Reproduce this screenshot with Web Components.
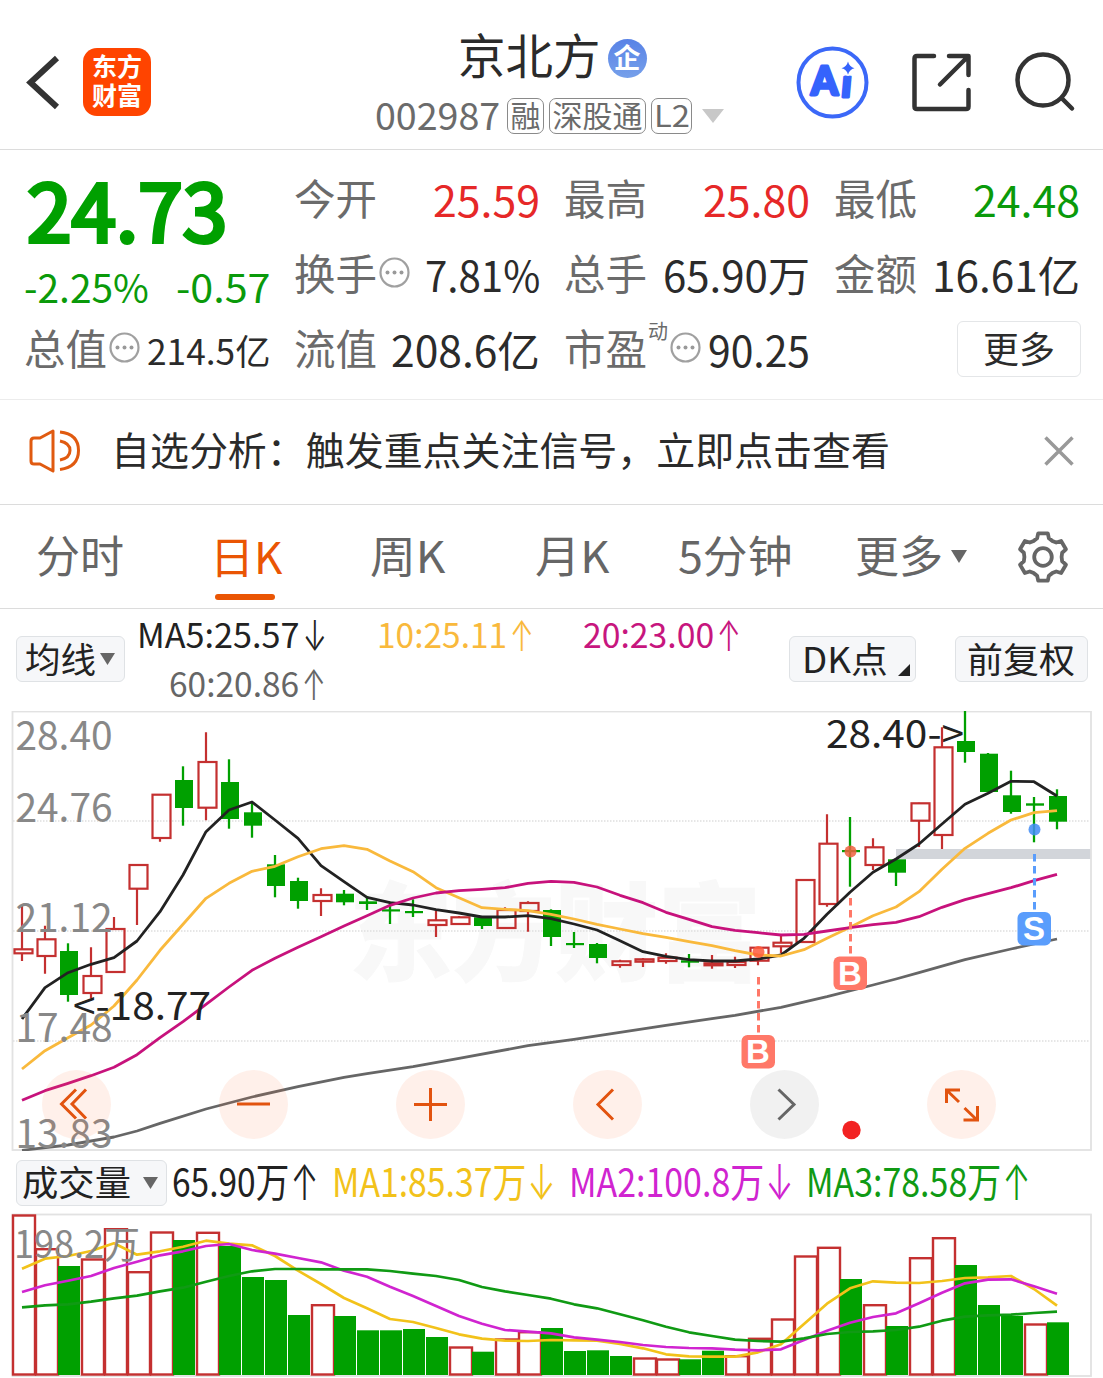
<!DOCTYPE html>
<html lang="zh-CN">
<head>
<meta charset="UTF-8">
<meta name="viewport" content="width=device-width, initial-scale=1.0">
<title>京北方 002987</title>
<style>
    :root {
        --up: #e62828;
        --down: #0a9a0a;
        --text: #2b2b2b;
        --muted: #6b6b6b;
        --accent: #ea5504;
        --line: #dcdcdc;
    }

    body {
        margin: 0;
        background: #fff;
        color: var(--text);
        font-family: "Noto Sans CJK SC", "Noto Sans", sans-serif;
    }
</style>
</head>
<body>
<stock-page></stock-page>

<script>
const FONT = '"Noto Sans CJK SC", "Noto Sans", sans-serif';

// One line of text, optically centred; "w" squeezes or stretches it to a width
class FitText extends HTMLElement {
    constructor() {
        super();
        this.attachShadow({ mode: 'open' });
        this.shadowRoot.innerHTML = `
            <style>
                :host { display: inline-block; line-height: 1; white-space: nowrap; flex: none; }
                span { display: inline-block; transform-origin: 0 50%; transform: translateY(-0.065em); }
            </style>
            <span><slot></slot></span>
        `;
    }

    connectedCallback() {
        const target = parseFloat(this.getAttribute('w'));
        if (!target) return;
        const span = this.shadowRoot.querySelector('span');
        const natural = span.offsetWidth;
        this.style.width = target + 'px';
        span.style.transform = `translateY(-0.065em) scaleX(${target / natural})`;
    }
}

// Trend arrow behind a moving average value: narrow and tall
class TrendArrow extends HTMLElement {
    constructor() {
        super();
        this.attachShadow({ mode: 'open' });
        this.shadowRoot.innerHTML = `
            <style>
                :host {
                    display: flex;
                    align-items: center;
                    justify-content: center;
                    width: 34px;
                    height: 40px;
                    margin-left: -2px;
                    font: 300 1.12em/1 Inter, "DejaVu Sans", sans-serif;
                    flex: none;
                }
                span { display: block; transform: scale(0.76, 1.12); }
            </style>
            <span><slot></slot></span>
        `;
    }
}

class InfoDots extends HTMLElement {
    constructor() {
        super();
        this.attachShadow({ mode: 'open' });
        this.shadowRoot.innerHTML = `
            <style>
                :host { display: block; width: 31px; height: 31px; flex: none; }
                svg { display: block; }
            </style>
            <svg width="31" height="31" viewBox="0 0 31 31">
                <circle cx="15.5" cy="15.5" r="14" fill="none" stroke="#a0a0a0" stroke-width="2.2"/>
                <g fill="#999"><circle cx="8.5" cy="15.5" r="2"/><circle cx="15.5" cy="15.5" r="2"/><circle cx="22.5" cy="15.5" r="2"/></g>
            </svg>
        `;
    }
}

class AppHeader extends HTMLElement {
    constructor() {
        super();
        this.attachShadow({ mode: 'open' });
        this.shadowRoot.innerHTML = `
            <style>
                :host {
                    display: flex;
                    height: 149px;
                    border-bottom: 1px solid var(--line);
                }
                svg { display: block; }
                .left { display: flex; align-items: center; padding: 15px 0 0 24px; width: 351px; box-sizing: border-box; }
                .logo {
                    display: flex;
                    flex-direction: column;
                    align-items: center;
                    justify-content: center;
                    gap: 4px;
                    width: 68px;
                    height: 68px;
                    margin-left: 21px;
                    border-radius: 14px;
                    background: #ff4400;
                    color: #fff;
                    font-size: 25px;
                    font-weight: 700;
                }
                .middle { display: flex; flex-direction: column; width: 400px; }
                .name { display: flex; align-items: center; height: 44px; margin-top: 35px; padding-left: 107px; font-size: 47.5px; }
                .badge {
                    display: flex;
                    align-items: center;
                    justify-content: center;
                    width: 39px;
                    height: 39px;
                    margin: 3px 0 0 7px;
                    border-radius: 50%;
                    background: linear-gradient(#5882e6, #76a0ea);
                    color: #fff;
                    font-size: 27px;
                    font-weight: 700;
                }
                .code { display: flex; align-items: center; height: 36px; margin-top: 19px; padding-left: 24px; color: var(--muted); font-size: 37px; }
                .tag {
                    display: flex;
                    align-items: center;
                    justify-content: center;
                    box-sizing: border-box;
                    height: 36px;
                    margin-right: 5px;
                    border: 1.5px solid #8a8a8a;
                    border-radius: 7px;
                    font-size: 30px;
                }
                .actions { display: flex; padding: 45px 0 0 44px; }
            </style>
            <div class="left">
                <svg width="38" height="60" viewBox="0 0 38 60"><path d="M33 6 6.500 30.500 33 55" fill="none" stroke="#333" stroke-width="6"/></svg>
                <div class="logo"><fit-text w="50">东方</fit-text><fit-text w="50">财富</fit-text></div>
            </div>
            <div class="middle">
                <div class="name"><fit-text>京北方</fit-text><span class="badge"><fit-text>企</fit-text></span></div>
                <div class="code">
                    <fit-text w="125">002987</fit-text>
                    <span class="tag" style="width:37px;margin-left:7px">
                        <fit-text>融</fit-text></span>
                    <span class="tag" style="width:97px"><fit-text>深股通</fit-text></span>
                    <span class="tag" style="width:41px"><fit-text w="36">L2</fit-text></span>
                    <svg width="22" height="14" viewBox="0 0 22 14" style="margin-left:5px"><path d="M0 0H22L11 14Z" fill="#c8c8c8"/></svg>
                </div>
            </div>
            <div class="actions">
                <svg width="308" height="76" viewBox="795 45 308 76" fill="none">
                    <circle cx="832.5" cy="82.500" r="34" stroke="#3b68f8" stroke-width="4"/>
                    <g fill="#3563fc" stroke="#3563fc" stroke-linejoin="round" font-family="Lato, sans-serif" font-weight="900">
                        <text x="811" y="94.500" font-size="39" stroke-width="3" textLength="27" lengthAdjust="spacingAndGlyphs">A</text>
                        <text font-size="39" stroke-width="3" transform="translate(840.5 96.5) skewX(-5)">i</text>
                    </g>
                    <circle cx="848" cy="67.500" r="8.500" fill="#fff"/>
                    <path d="M848 61.500q1.200 5 6.500 6.700-5 1-6.500 6.500-1.200-5.500-6.500-6.500 5.300-1.700 6.500-6.700Z" fill="#3563fc"/>
                    <g stroke="#333" stroke-width="4.500" stroke-linecap="round" stroke-linejoin="round">
                        <path d="M934 56H917q-2.500 0-2.500 2.500V106.500q0 2.500 2.500 2.500H966q2.500 0 2.500-2.500V90M949 56H968.500V75M968 56.500 940 84.500"/>
                        <circle cx="1043" cy="80" r="25.500"/>
                        <path d="M1061.500 98 1072 108.500"/>
                    </g>
                </svg>
            </div>
        `;
    }
}

class QuoteCell extends HTMLElement {
    constructor() {
        super();
        this.attachShadow({ mode: 'open' });
        const get = name => this.getAttribute(name);
        this.shadowRoot.innerHTML = `
            <style>
                :host { display: flex; align-items: center; justify-content: space-between; }
                .label { display: flex; align-items: center; color: var(--muted); font-size: 41.5px; }
                .sup { font-size: 20px; margin: -38px 0 0 1px; }
                info-dots { margin: -6px 0 0 2px; }
                .value { margin-top: 2px; font-size: ${get('size') || 42}px; color: ${get('tone') ? `var(--${get('tone')})` : 'var(--text)'}; }
            </style>
            <span class="label">
                <fit-text>${get('label')}</fit-text>
                ${get('sup') ? `<fit-text class="sup">${get('sup')}</fit-text>` : ''}
                ${this.hasAttribute('info') ? '<info-dots></info-dots>' : ''}
            </span>
            <fit-text class="value" w="${get('w')}">${get('value')}</fit-text>
        `;
    }
}

class QuotePanel extends HTMLElement {
    constructor() {
        super();
        this.attachShadow({ mode: 'open' });
        this.shadowRoot.innerHTML = `
            <style>
                :host {
                    display: grid;
                    box-sizing: border-box;
                    height: 250px;
                    grid-template-columns: repeat(4, 246px);
                    grid-template-rows: 74px 75px 75px;
                    column-gap: 24px;
                    padding: 14px 0 0 24px;
                    border-bottom: 1px solid #ececec;
                }
                .price { grid-row: span 2; color: var(--down); }
                .big { display: flex; align-items: center; height: 97px; padding-left: 3px; font-size: 79px; -webkit-text-stroke: 4px #00a000; color: #00a000; }
                .change { display: flex; align-items: center; justify-content: space-between; height: 55px; font-size: 39.5px; }
                .more {
                    display: flex;
                    align-items: center;
                    justify-content: center;
                    justify-self: end;
                    align-self: center;
                    box-sizing: border-box;
                    width: 124px;
                    height: 56px;
                    margin: -4px -1px 0 0;
                    border: 1.5px solid #e4e6e8;
                    border-radius: 6px;
                    font-size: 36px;
                }
            </style>
            <div class="price">
                <div class="big"><fit-text w="200">24.73</fit-text></div>
                <div class="change"><fit-text w="125">-2.25%</fit-text><fit-text w="94">-0.57</fit-text></div>
            </div>
            <quote-cell label="今开" value="25.59" tone="up" w="107"></quote-cell>
            <quote-cell label="最高" value="25.80" tone="up" w="107"></quote-cell>
            <quote-cell label="最低" value="24.48" tone="down" w="107"></quote-cell>
            <quote-cell label="换手" value="7.81%" w="115" info></quote-cell>
            <quote-cell label="总手" value="65.90万" w="147"></quote-cell>
            <quote-cell label="金额" value="16.61亿" w="148"></quote-cell>
            <quote-cell label="总值" value="214.5亿" w="123" size="35" info></quote-cell>
            <quote-cell label="流值" value="208.6亿" w="149"></quote-cell>
            <quote-cell label="市盈" sup="动" value="90.25" w="102" info></quote-cell>
            <div class="more"><fit-text>更多</fit-text></div>
        `;
    }
}

class NoticeBar extends HTMLElement {
    constructor() {
        super();
        this.attachShadow({ mode: 'open' });
        this.shadowRoot.innerHTML = `
            <style>
                :host {
                    display: flex;
                    align-items: center;
                    box-sizing: border-box;
                    height: 105px;
                    padding: 0 29px 2px 28px;
                    border-bottom: 1px solid var(--line);
                    font-size: 38.8px;
                }
                fit-text { margin-left: 29px; }
                .close { margin-left: auto; }
            </style>
            <svg width="54" height="44" viewBox="28 430 54 44" fill="none" stroke="#e05a10" stroke-width="3">
                <path d="M40 439H34q-3 0-3 3V462q0 3 3 3H40L53 472V432L40 439Z" stroke-linejoin="round"/>
                <path d="M60 442Q70 444 70 451.500T60 461M60 433Q78.500 435 78.500 451.500T60 470.500"/>
            </svg>
            <fit-text w="779">自选分析：触发重点关注信号，立即点击查看</fit-text>
            <svg class="close" width="30" height="30" viewBox="0 0 30 30"><path d="M1.500 1.500 28.500 28.500M28.500 1.500 1.500 28.500" stroke="#999" stroke-width="3.500"/></svg>
        `;
    }
}

class PeriodTabs extends HTMLElement {
    constructor() {
        super();
        this.attachShadow({ mode: 'open' });
        this.shadowRoot.innerHTML = `
            <style>
                :host {
                    display: grid;
                    grid-template-columns: 174px 160px 165px 143px 177px 161px 54px;
                    align-items: center;
                    box-sizing: border-box;
                    height: 104px;
                    padding-left: 36px;
                    border-bottom: 1px solid var(--line);
                    color: #666;
                    font-size: 44px;
                }
                .active { display: flex; flex-direction: column; justify-content: flex-end; height: 86px; color: var(--accent); }
                .active::after { content: ""; width: 60px; height: 6px; margin: 14px 0 0 5px; border-radius: 3px; background: var(--accent); }
                .more { display: flex; align-items: center; gap: 8px; }
            </style>
            <fit-text>分时</fit-text>
            <div class="active"><fit-text>日K</fit-text></div>
            <fit-text w="75">周K</fit-text>
            <fit-text w="74">月K</fit-text>
            <fit-text w="114">5分钟</fit-text>
            <div class="more"><fit-text>更多</fit-text><svg width="16" height="13" viewBox="0 0 16 13"><path d="M0 0H16L8 13Z" fill="#666"/></svg></div>
            <svg width="54" height="54" viewBox="-27 -27 54 54" fill="none" stroke="#666" stroke-width="3.800" stroke-linejoin="round">
                <path id="gear"/>
                <circle r="8.800"/>
            </svg>
        `;
        this.shadowRoot.getElementById('gear').setAttribute('d', this.gearPath());
    }

    // six teeth, one every 60 degrees, with valleys between them
    gearPath() {
        const points = [];
        for (let k = 0; k < 6; k++) {
            const teeth = [[-11.5, 24.2], [11.5, 24.2], [17.5, 19.6], [30, 18.6], [42.5, 19.6]];
            teeth.forEach(([offset, radius]) => {
                const angle = (k * 60 - 90 + offset) * Math.PI / 180;
                points.push((radius * Math.cos(angle)).toFixed(2) + ' ' + (radius * Math.sin(angle)).toFixed(2));
            });
        }
        return 'M' + points.join('L') + 'Z';
    }
}

class PillButton extends HTMLElement {
    constructor() {
        super();
        this.attachShadow({ mode: 'open' });
        this.shadowRoot.innerHTML = `
            <style>
                :host {
                    display: flex;
                    align-items: center;
                    box-sizing: border-box;
                    height: 46px;
                    border: 1.5px solid #dfe2e5;
                    border-radius: 6px;
                    background: #f6f7f9;
                    color: #222;
                    font-size: 35px;
                    flex: none;
                }
            </style>
            <slot></slot>
        `;
    }
}

class MaBar extends HTMLElement {
    constructor() {
        super();
        this.attachShadow({ mode: 'open' });
        this.shadowRoot.innerHTML = `
            <style>
                :host { display: flex; box-sizing: border-box; height: 102px; padding-left: 16px; font-size: 34px; }
                pill-button { margin-top: 27px; }
                .values { display: grid; grid-template-columns: 240px 206px 205px; grid-template-rows: 49px 49px; width: 652px; margin: 2px 0 0 12px; }
                .item { display: flex; align-items: center; }
                .corner { align-self: flex-end; margin: 0 0 5px 10px; }
            </style>
            <pill-button style="width:109px;padding-left:8px"><fit-text w="71">均线</fit-text><svg width="15" height="12" viewBox="0 0 15 12" style="margin-left:4px"><path d="M0 0H15L7.500 12Z" fill="#666"/></svg></pill-button>
            <div class="values">
                <div class="item" style="color:#222"><fit-text w="163">MA5:25.57</fit-text><trend-arrow>↓</trend-arrow></div>
                <div class="item" style="color:#f9b93c"><fit-text w="130">10:25.11</fit-text><trend-arrow>↑</trend-arrow></div>
                <div class="item" style="color:#c7167e"><fit-text w="131">20:23.00</fit-text><trend-arrow>↑</trend-arrow></div>
                <div class="item" style="color:#666;padding-left:32px"><fit-text w="130">60:20.86</fit-text><trend-arrow>↑</trend-arrow></div>
            </div>
            <pill-button style="width:127px;padding-left:12px"><fit-text w="86">DK点</fit-text><svg class="corner" width="12" height="12" viewBox="0 0 12 12"><path d="M12 0V12H0Z" fill="#222"/></svg></pill-button>
            <pill-button style="width:133px;padding-left:11px;margin-left:39px"><fit-text w="108">前复权</fit-text></pill-button>
        `;
    }
}

class CandleChart extends HTMLElement {
    constructor() {
        super();
        this.attachShadow({ mode: 'open' });
        this.shadowRoot.innerHTML = `
            <style>
                :host { display: block; position: relative; height: 440px; }
                svg { display: block; }
                /* round buttons float over the plot */
                .controls { position: absolute; left: 42px; top: 359px; display: flex; gap: 108px; }
                .controls svg { border-radius: 50%; background: rgba(252, 110, 50, 0.1); }
                .controls svg.off { background: rgba(80, 80, 80, 0.08); }
            </style>
            <svg width="1103" height="440" viewBox="0 711 1103 440">${this.plot()}</svg>
            <div class="controls">
                ${this.control('M34 19.500 19.500 34 34 48.500M44 19.500 30 34 44 48.500')}
                ${this.control('M18 34H51')}
                ${this.control('M18 34.500H51M34.500 18V51')}
                ${this.control('M40 19.500 25 34.500 40 49.500')}
                ${this.control('M28.500 19.500 44 34.500 28.500 49.500', 'off')}
                ${this.control('M19.500 33V20H33M20 20.500 32 32M36.500 50H50.500V36M50 50 37.500 38')}
            </div>
        `;
    }

    control(d, name = '') {
        return `<svg class="${name}" width="69" height="69" fill="none" stroke="${name ? '#666' : '#e2530f'}" stroke-width="3"><path d="${d}"/></svg>`;
    }

    // values are thirds of a pixel below y = 705
    y(v) {
        return +(705 + v / 3).toFixed(1);
    }

    line(points, color) {
        const d = points.map(([i, v]) => `${22 + 23 * i},${this.y(v)}`).join(' ');
        return `<polyline points="${d}" fill="none" stroke="${color}" stroke-width="2.800" stroke-linejoin="round"/>`;
    }

    // up/down, high, body top, body bottom, low
    candle([dir, high, top, bottom, low], i) {
        const x = 22 + 23 * i;
        const [h, t, b, l] = [high, top, bottom, low].map(v => this.y(v));
        if (dir === 'g') {
            // a doji still shows a bar of two pixels
            return `<path d="M${x} ${h}V${l}" stroke="#00a000" stroke-width="2.300"/><rect x="${x - 8}" y="${t}" width="18" height="${Math.max(b - t, 2.2)}" fill="#00a000"/>`;
        }
        return `<path d="M${x} ${h}V${t}M${x} ${b}V${l}" stroke="#c43030" stroke-width="2.200"/>
            <rect x="${x - 7.5}" y="${t}" width="18" height="${Math.max(b - t, 1)}" fill="none" stroke="#c43030" stroke-width="2.200"/>`;
    }

    marker(x, dotY, from, boxY, letter, color, dot) {
        return `<circle cx="${x}" cy="${dotY}" r="6" fill="${dot}" opacity=".85"/>
            <path d="M${x} ${from}V${boxY}" stroke="${color}" stroke-width="3" stroke-dasharray="7.500 4.500"/>
            <rect x="${x - 17}" y="${boxY}" width="33.500" height="33.500" rx="6" fill="${color}"/>
            <text x="${x - 0.5}" y="${boxY + 28}" text-anchor="middle" font-family="Liberation Sans, sans-serif" font-weight="700" font-size="33" fill="#fff">${letter}</text>`;
    }

    plot() {
        const candles = [
            ['r',602,733,745,768], ['r',662,703,753,806], ['g',715,738,870,890], ['r',727,813,864,880], ['r',636,672,801,801],
            ['r',478,480,551,660], ['r',268,269,399,410], ['g',184,225,309,362], ['r',82,171,308,346], ['g',163,231,342,371],
            ['g',290,322,362,398], ['g',450,478,543,577], ['g',518,528,588,611], ['r',550,570,588,633], ['g',555,566,592,601],
            ['g',573,589,597,615], ['g',590,613,619,657], ['g',583,618,622,636], ['r',618,646,660,696], ['r',633,637,657,658],
            ['g',635,637,663,672], ['r',607,615,669,669], ['r',589,594,618,680], ['g',613,615,696,723], ['g',681,714,719,729],
            ['g',714,717,759,775], ['r',764,769,780,788], ['r',759,763,770,786], ['r',745,758,768,776], ['g',747,766,773,787],
            ['r',750,775,781,791], ['r',755,771,780,789], ['r',725,728,767,781], ['r',693,713,724,745], ['r',524,525,711,711],
            ['r',328,416,597,605], ['g',336,435,441,545], ['r',400,427,480,495], ['g',462,463,503,543], ['r',293,295,347,426],
            ['r',67,127,390,432], ['g',18,108,141,173], ['g',144,146,261,261], ['g',197,271,321,326], ['g',276,295,302,412],
            ['g',253,273,350,373]
        ];
        const ma5 = [942,848,803,778,758,708,620,510,380,315,291,345,400,482,530,577,593,600,614,624,636,636,632,641,657,675,707,740,754,764,768,768,762,750,700,628,562,502,462,417,357,298,265,229,230,273];
        const ma10 = [1092,1037,998,960,903,825,736,658,580,535,499,484,455,431,422,433,468,500,548,578,608,613,617,628,642,658,672,686,697,710,722,737,750,753,734,700,667,632,606,560,493,430,385,345,323,317];
        const ma20 = [1186,1157,1135,1112,1087,1049,998,950,898,846,796,760,727,695,663,632,601,579,564,557,553,548,535,529,532,546,571,593,622,643,665,676,683,690,688,678,668,659,652,635,607,584,566,548,527,508];
        const ma60 = [[0,1336],[2,1320],[4,1296],[5,1278],[6,1255],[8,1212],[10,1176],[12,1145],[14,1117],[15,1106],[17,1085],[19,1060],[22,1022],[24,1003],[26,982],[28,961],[30,941],[31,931],[33,907],[35,875],[37,840],[38,822],[39,803],[41,764],[43,732],[45,702]];
        const indexed = list => list.map((v, i) => [i, v]);
        const scale = [['28.40', 749.5], ['24.76', 821.5], ['21.12', 931.5], ['17.48', 1041.5], ['13.83', 1147.5]];

        return `
            <text x="349" y="972" font-family='${FONT}' font-weight="900" font-size="106" textLength="412" lengthAdjust="spacingAndGlyphs" fill="#f8f8f8" stroke="#f8f8f8" stroke-width="1">东方财富</text>
            <g stroke="#dedede" stroke-width="1.500" stroke-dasharray="1.500 1.500"><path d="M13 821H1090M13 931H1090M13 1041H1090"/></g>
            <rect x="896" y="849" width="195" height="10" fill="#d2d5da"/>
            <rect x="12.500" y="711.500" width="1078.500" height="438.500" fill="none" stroke="#e2e2e2" stroke-width="1.800"/>
            ${candles.map((c, i) => this.candle(c, i)).join('')}
            ${this.line(ma60, '#666')}
            ${this.line(indexed(ma5), '#222')}
            ${this.line(indexed(ma10), '#f9b93c')}
            ${this.line(indexed(ma20), '#c7127c')}
            <g font-family='${FONT}' font-size="39.500" fill="#888">
                ${scale.map(([label, y]) => `<text x="15.500" y="${y}" textLength="97" lengthAdjust="spacingAndGlyphs">${label}</text>`).join('')}
            </g>
            <g font-family='${FONT}' font-size="38.500" fill="#222">
                <text x="73" y="1019.500" textLength="138" lengthAdjust="spacingAndGlyphs">&lt;-18.77</text>
                <text x="826" y="747.500" textLength="138" lengthAdjust="spacingAndGlyphs">28.40-&gt;</text>
            </g>
            ${this.marker(758.5, 952, 977, 1035, 'B', '#ff7868', '#ff5a3c')}
            ${this.marker(850.5, 851.5, 898, 956.5, 'B', '#ff7868', '#f0603f')}
            ${this.marker(1034.5, 829.5, 854, 912, 'S', '#5a9dfc', '#3f8bf5')}
            <circle cx="851.500" cy="1130" r="9.200" fill="#f22222"/>
        `;
    }
}

class VolumeBar extends HTMLElement {
    constructor() {
        super();
        this.attachShadow({ mode: 'open' });
        this.shadowRoot.innerHTML = `
            <style>
                :host { display: flex; align-items: center; box-sizing: border-box; height: 62px; padding: 1px 0 0 16px; font-size: 39.5px; }
                .item { display: flex; align-items: center; }
            </style>
            <pill-button style="width:151px;padding-left:5px"><fit-text w="109">成交量</fit-text><svg width="15" height="12" viewBox="0 0 15 12" style="margin-left:12px"><path d="M0 0H15L7.500 12Z" fill="#666"/></svg></pill-button>
            <div class="item" style="color:#222;width:160px;padding-left:5px"><fit-text w="117">65.90万</fit-text><trend-arrow>↑</trend-arrow></div>
            <div class="item" style="color:#f2c21a;width:237px"><fit-text w="194">MA1:85.37万</fit-text><trend-arrow>↓</trend-arrow></div>
            <div class="item" style="color:#d024d0;width:237px"><fit-text w="195">MA2:100.8万</fit-text><trend-arrow>↓</trend-arrow></div>
            <div class="item" style="color:#109a14"><fit-text w="195">MA3:78.58万</fit-text><trend-arrow>↑</trend-arrow></div>
        `;
    }
}

class VolumeChart extends HTMLElement {
    constructor() {
        super();
        this.attachShadow({ mode: 'open' });
        this.shadowRoot.innerHTML = `
            <style>
                :host { display: block; height: 165px; }
                svg { display: block; }
            </style>
            <svg width="1103" height="165" viewBox="0 1213 1103 165">${this.plot()}</svg>
        `;
    }

    y(v) {
        return +(1150 + v / 3).toFixed(1);
    }

    line(values, color) {
        const d = values.map((v, i) => `${22 + 23 * i},${this.y(v)}`).join(' ');
        return `<polyline points="${d}" fill="none" stroke="${color}" stroke-width="2.700" stroke-linejoin="round"/>`;
    }

    plot() {
        const dirs = 'rrgrrrrgrggggrgggggrgrrggggrrggrrrrrgrgrrgggrg';
        const tops = [195,296,348,327,236,365,246,270,247,288,381,390,495,464,498,541,541,537,561,591,605,567,545,534,603,601,618,624,627,628,602,617,565,507,318,292,387,464,528,323,263,345,465,498,522,517];
        const ma1 = [356,326,318,303,280,314,304,290,272,281,286,318,362,402,444,475,507,516,534,553,566,572,573,570,571,572,582,595,613,619,620,620,607,583,522,461,415,394,398,399,393,384,382,378,417,467];
        const ma2 = [426,406,392,378,354,335,316,304,288,282,300,311,324,337,362,380,410,438,468,498,521,540,545,550,562,569,576,585,591,594,595,599,601,598,570,542,518,501,490,460,428,400,389,388,409,431];
        const ma3 = [472,466,463,455,445,437,424,413,395,378,364,357,357,358,358,358,363,371,378,390,411,424,435,446,463,475,493,511,530,547,558,569,573,575,565,552,546,544,540,530,512,500,496,494,489,485];
        const bars = tops.map((v, i) => {
            const x = 12 + 23 * i;
            const top = this.y(v);
            return dirs[i] === 'g'
                ? `<rect x="${x}" y="${top}" width="22" height="${1375 - top}" fill="#00a000"/>`
                : `<rect x="${x + 1}" y="${top + 0.5}" width="22" height="${1374 - top}" fill="none" stroke="#c43030" stroke-width="2.400"/>`;
        });
        return `
            <rect x="12.500" y="1214.500" width="1078.500" height="161.500" fill="none" stroke="#e2e2e2" stroke-width="1.800"/>
            ${bars.join('')}
            ${this.line(ma1, '#f2c21a')}
            ${this.line(ma2, '#d024d0')}
            ${this.line(ma3, '#109a14')}
            <text x="14" y="1257.500" font-family='${FONT}' font-size="37.500" textLength="126" lengthAdjust="spacingAndGlyphs" fill="#888">198.2万</text>
        `;
    }
}

class StockPage extends HTMLElement {
    constructor() {
        super();
        this.attachShadow({ mode: 'open' });
        this.shadowRoot.innerHTML = `
            <style>
                :host { display: flex; flex-direction: column; width: 1103px; height: 1378px; overflow: hidden; }
            </style>
            <app-header></app-header>
            <quote-panel></quote-panel>
            <notice-bar></notice-bar>
            <period-tabs></period-tabs>
            <ma-bar></ma-bar>
            <candle-chart></candle-chart>
            <volume-bar></volume-bar>
            <volume-chart></volume-chart>
        `;
    }
}

customElements.define('fit-text', FitText);
customElements.define('trend-arrow', TrendArrow);
customElements.define('info-dots', InfoDots);
customElements.define('pill-button', PillButton);
customElements.define('quote-cell', QuoteCell);
customElements.define('app-header', AppHeader);
customElements.define('quote-panel', QuotePanel);
customElements.define('notice-bar', NoticeBar);
customElements.define('period-tabs', PeriodTabs);
customElements.define('ma-bar', MaBar);
customElements.define('candle-chart', CandleChart);
customElements.define('volume-bar', VolumeBar);
customElements.define('volume-chart', VolumeChart);
customElements.define('stock-page', StockPage);
</script>
</body>
</html>
